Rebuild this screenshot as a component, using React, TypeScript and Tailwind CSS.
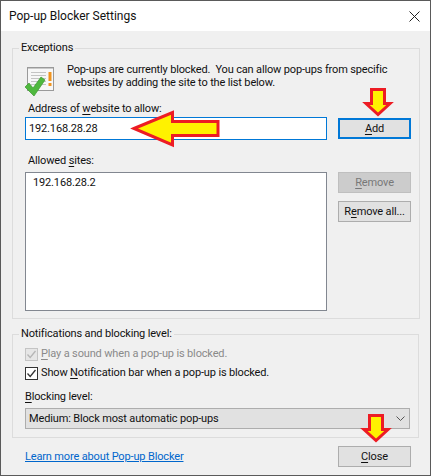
import type { ReactNode } from "react";

function Underlined({ before, letter, after }: { before?: string; letter: string; after: string }) {
  return (
    <>
      {before}
      <span className="underline underline-offset-2">{letter}</span>
      {after}
    </>
  );
}

function DialogButton({
  children,
  focused,
  disabled,
}: {
  children: ReactNode;
  focused?: boolean;
  disabled?: boolean;
}) {
  return (
    <button
      className={`flex h-[21px] w-[73px] items-center justify-center ${
        focused
          ? "border-2 border-[#0078d7] bg-[#e1e1e1] text-[#111]"
          : disabled
            ? "border border-[#bfbfbf] bg-[#cccccc] text-[#787878]"
            : "border border-[#adadad] bg-[#e1e1e1] text-[#111]"
      }`}
    >
      {children}
    </button>
  );
}

function LeftArrow({ className }: { className: string }) {
  return (
    <svg className={`absolute ${className}`} width="92" height="42" viewBox="0 0 92 42">
      <path d="M6 20.5 L44.5 4.5 V13.5 H90 V27.5 H44.5 V37 Z" fill="#fff200" stroke="#ed1c24" strokeWidth="3" />
    </svg>
  );
}

function DownArrow({ className }: { className: string }) {
  return (
    <svg className={`absolute ${className}`} width="33" height="33" viewBox="0 0 33 33">
      <path d="M9.5 3.5 H22.5 V17.5 H28 L16 28.5 L4 17.5 H9.5 Z" fill="#fff200" stroke="#ed1c24" strokeWidth="3" />
    </svg>
  );
}

function Check({ disabled }: { disabled?: boolean }) {
  return (
    <span
      className={`flex h-[13px] w-[13px] shrink-0 items-center justify-center border ${
        disabled ? "border-[#c4c4c4] bg-[#e6e6e6]" : "border-[#333] bg-white"
      }`}
    >
      <svg width="11" height="11" viewBox="0 0 11 11">
        <path d="M1.5 5.5 L4.2 8.5 L9.5 2" fill="none" stroke={disabled ? "#b5b5b5" : "#333"} strokeWidth="1.3" />
      </svg>
    </span>
  );
}

function AllowIcon() {
  return (
    <svg className="mt-[3px] -ml-[1px] shrink-0" width="32" height="32" viewBox="0 0 32 32">
      <rect x="3.5" y="1.5" width="26" height="23" fill="#f7f7f7" stroke="#9a9a9a" />
      <path d="M4 2.5h25" stroke="#c9c9c9" />
      <path d="M7 6.5h15M7 9.5h15M7 12.5h15M7 15.5h15M7 18.5h15" stroke="#c4c4c4" />
      <path d="M24.5 6h3v9h-3zM24.5 17h3v3h-3z" fill="#f0941e" />
      <path d="M1 21 L5 17 L9 22 L17 11 L21 14 L10 30 Z" fill="#4fb83e" stroke="#3d9a30" strokeWidth="0.7" />
    </svg>
  );
}

export default function App() {
  return (
    <div className="relative h-[476px] w-[431px] border border-[#5a5a5a] bg-[#f0f0f0] font-['Roboto',sans-serif] text-[11px] leading-[16px] tracking-[-0.15px] text-[#111]">
      <div className="flex h-[30px] items-center justify-between bg-white pr-[10px] pl-2">
        <span className="text-[12px] tracking-normal">Pop-up Blocker Settings</span>
        <svg width="11" height="11" viewBox="0 0 11 11">
          <path d="M0.5 0.5 L10.5 10.5 M10.5 0.5 L0.5 10.5" stroke="#222" />
        </svg>
      </div>

      <div className="px-[11px] pt-[9px]">
        <fieldset className="h-[279px] border border-[#dcdcdc] pr-2 pl-3">
          <legend className="-ml-[6px] px-[2px]">Exceptions</legend>
          <div className="mt-[7px] flex gap-[11px]">
            <AllowIcon />
            <p className="leading-[13px] whitespace-nowrap">
              Pop-ups are currently blocked.&nbsp; You can allow pop-ups from specific
              <br />
              websites by adding the site to the list below.
            </p>
          </div>
          <p className="mt-[3px] pl-[3px]">
            <Underlined before="Address of " letter="w" after="ebsite to allow:" />
          </p>
          <div className="flex gap-[11px]">
            <div className="flex h-[23px] w-[302px] items-center border border-[#0078d7] bg-white pl-[3px]">
              192.168.28.28
            </div>
            <div className="mt-[1px]">
              <DialogButton focused>
                <Underlined letter="A" after="dd" />
              </DialogButton>
            </div>
          </div>
          <p className="mt-[13px] pl-[3px]">
            <Underlined before="Allowed " letter="s" after="ites:" />
          </p>
          <div className="mt-[3px] flex gap-[11px]">
            <div className="h-[139px] w-[302px] border border-[#828790] bg-white pt-[2px] pl-[7px]">
              192.168.28.2
            </div>
            <div className="flex flex-col gap-2">
              <DialogButton disabled>
                <Underlined letter="R" after="emove" />
              </DialogButton>
              <DialogButton>
                <Underlined before="R" letter="e" after="move all..." />
              </DialogButton>
            </div>
          </div>
        </fieldset>

        <fieldset className="mt-[7px] h-[112px] border border-[#dcdcdc] pr-2 pl-3">
          <legend className="-ml-[6px] px-[2px]">Notifications and blocking level:</legend>
          <div className="mt-[4px] flex items-center gap-[3px] text-[#8a8a8a]">
            <Check disabled />
            <span>
              <Underlined letter="P" after="lay a sound when a pop-up is blocked." />
            </span>
          </div>
          <div className="mt-[3px] flex items-center gap-[3px]">
            <Check />
            <span>
              <Underlined before="Show " letter="N" after="otification bar when a pop-up is blocked." />
            </span>
          </div>
          <p className="mt-[8px]">
            <Underlined letter="B" after="locking level:" />
          </p>
          <div className="mt-[3px] flex h-[21px] items-center justify-between border border-[#adadad] bg-[#e1e1e1] pr-[4px] pl-[3px]">
            <span>Medium: Block most automatic pop-ups</span>
            <svg width="9" height="5" viewBox="0 0 9 5">
              <path d="M0.5 0.5 L4.5 4.5 L8.5 0.5" fill="none" stroke="#555" />
            </svg>
          </div>
        </fieldset>

        <div className="mt-[8px] flex items-center justify-between pr-2 pl-[13px]">
          <a className="text-[#0066cc] underline">Learn more about Pop-up Blocker</a>
          <DialogButton>
            <Underlined letter="C" after="lose" />
          </DialogButton>
        </div>
      </div>

      <LeftArrow className="top-[107px] left-[127px]" />
      <DownArrow className="top-[85px] left-[361px]" />
      <DownArrow className="top-[411px] left-[359px]" />
    </div>
  );
}
